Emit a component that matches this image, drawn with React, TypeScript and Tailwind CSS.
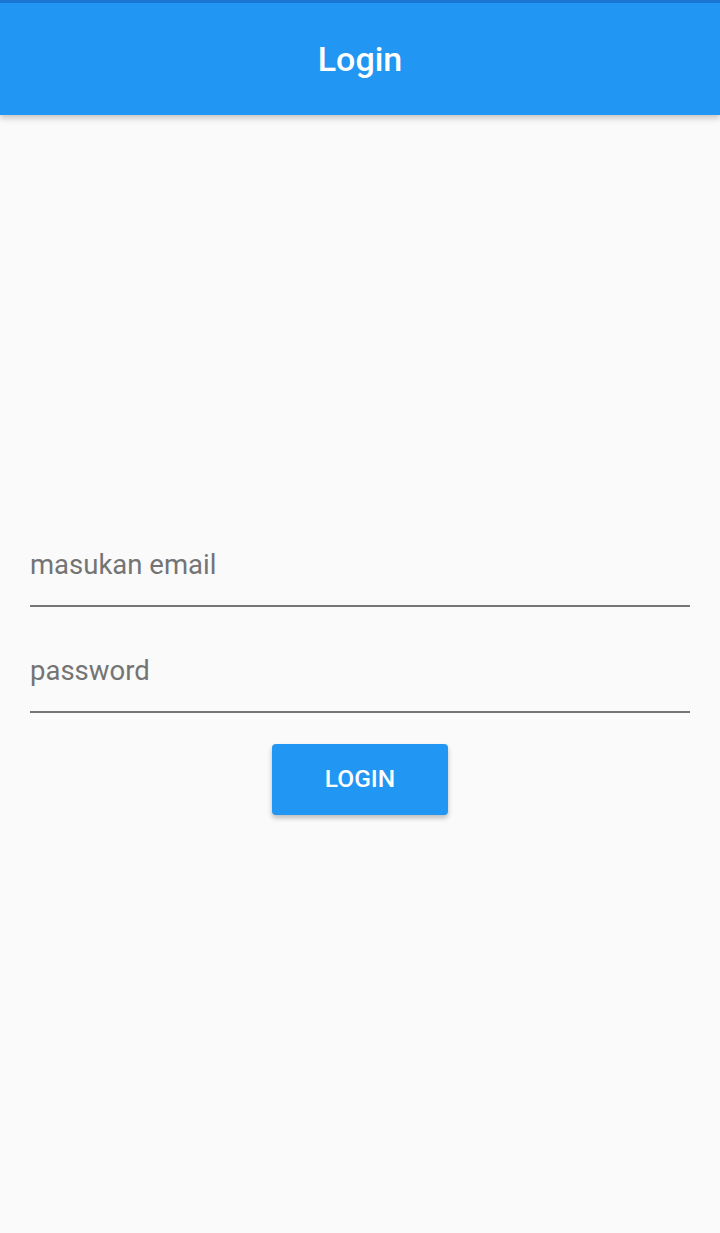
export default function App() {
  return (
    <div className="flex min-h-[1233px] flex-col bg-[#fafafa] font-['Roboto',sans-serif]">
      {/* status strip + app bar */}
      <div className="relative z-10 shadow-[0_3px_6px_rgba(0,0,0,0.22)]">
        <div className="h-[3px] bg-[#1976d2]" />
        <div className="flex h-[112px] items-center justify-center bg-[#2196f3]">
          <h1 className="text-[34px] font-medium leading-none text-white">Login</h1>
        </div>
      </div>

      <div className="flex flex-1 flex-col justify-center px-[30px]">
        <input
          type="email"
          placeholder="masukan email"
          className="block h-[74px] w-full border-b-2 border-[#757575] bg-transparent pt-[13px] pb-[23px] text-[27.5px] leading-[36px] text-[#212121] outline-none placeholder:text-[#747474]"
        />
        <input
          type="password"
          placeholder="password"
          className="mt-[32px] block h-[74px] w-full border-b-2 border-[#757575] bg-transparent pt-[13px] pb-[23px] text-[27.5px] leading-[36px] text-[#212121] outline-none placeholder:text-[#747474]"
        />
        <div className="mt-[31px] flex justify-center">
          <button className="h-[71px] w-[176px] rounded-[4px] bg-[#2196f3] text-[24.5px] font-medium text-white shadow-[0_3px_5px_rgba(0,0,0,0.25)]">
            LOGIN
          </button>
        </div>
      </div>
    </div>
  );
}
